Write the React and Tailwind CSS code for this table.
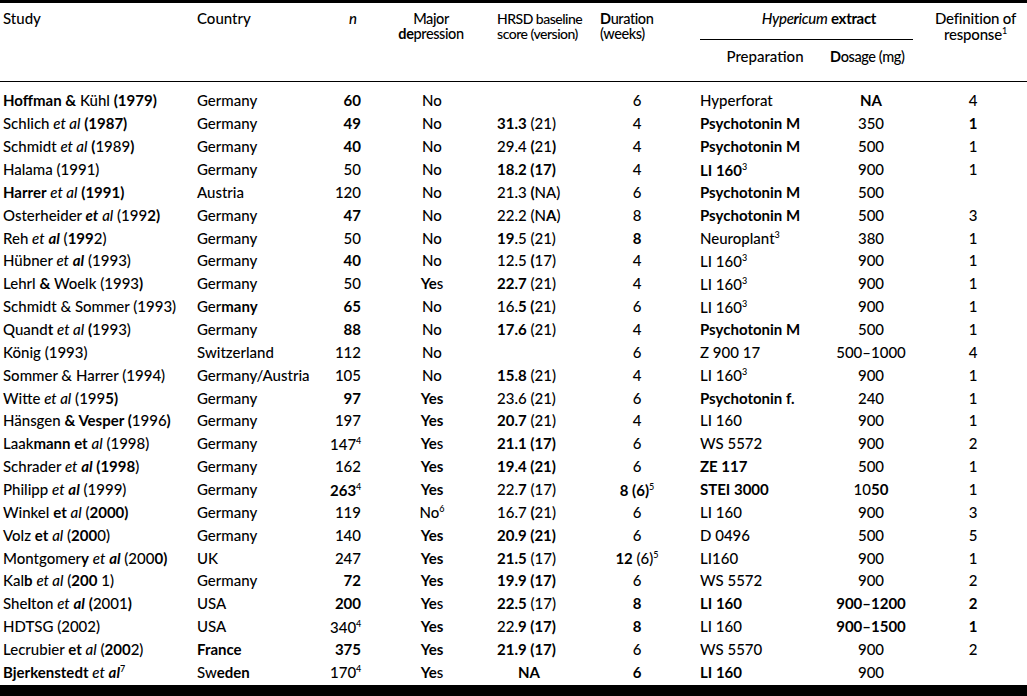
import React from "react";

const rows = [
  ["*Hoffman &* Kühl *(1979)*", "Germany", "*60*", "No", "", "6", "Hyperforat", "*NA*", "4"],
  ["Schlich _et al_ *(1987)*", "Germany", "*49*", "No", "*31.3* (21)", "4", "*Psychotonin M*", "350", "*1*"],
  ["Schmidt _et al_ *(*1989*)*", "Germany", "*40*", "No", "29.4 *(*21*)*", "4", "*Psychotonin M*", "500", "1"],
  ["Halama (1991)", "Germany", "50", "No", "*18.2 (17)*", "4", "*LI 160*^3^", "900", "1"],
  ["*Harrer* _et al_ *(1991)*", "Austria", "120", "No", "21.3 *(*NA)", "6", "*Psychotonin M*", "500", ""],
  ["Osterheider *_et_* _al_ (199*2)*", "Germany", "*47*", "No", "22.2 (N*A*)", "8", "*Psychotonin M*", "500", "3"],
  ["Reh _et_ *_al_* (*199*2)", "Germany", "50", "No", "*19*.5 (21)", "*8*", "Neuroplant^3^", "380", "1"],
  ["Hübner _et_ *_al_* (1993)", "Germany", "*40*", "No", "12.5 *(*17)", "4", "LI 160^3^", "900", "1"],
  ["Lehrl *&* Woelk (1993*)*", "Germany", "50", "*Ye*s", "*22.7* (21)", "4", "LI 160^3^", "900", "1"],
  ["Schmidt & Sommer (1993)", "Ger*many*", "*65*", "No", "16.*5 (*21)", "6", "LI 160^3^", "900", "1"],
  ["Quand*t* _et al_ *(*1993)", "Germany", "*88*", "No", "*17.6* (21)", "4", "*Psychotonin M*", "500", "1"],
  ["König (1993)", "Switzerland", "112", "No", "", "6", "Z 900 17", "500–1000", "4"],
  ["Sommer & Harrer (1994)", "Germany/Austria", "105", "No", "*15.8* (21)", "4", "LI 160^3^", "900", "1"],
  ["Witte _et al_ (199*5)*", "Germany", "*97*", "*Yes*", "23.6 (21)", "6", "*Psychotonin f.*", "240", "1"],
  ["Hänsgen *& Vesper (*1996*)*", "Germany", "197", "*Yes*", "*20.7* (21)", "4", "LI 160", "900", "1"],
  ["Laak*mann et* _al_ (1998)", "Germany", "147^4^", "*Ye*s", "*21.1 (17)*", "6", "WS 5572", "900", "2"],
  ["Schrader _et_ *_al_ (1998*)", "Germany", "162", "*Yes*", "*19.4 (21)*", "6", "*ZE 117*", "500", "1"],
  ["Philipp _et_ *_al_* (1999)", "Germany", "*263*^4^", "*Yes*", "22.*7* (17)", "*8 (6)*^5^", "*STEI 3000*", "10*50*", "1"],
  ["Winkel *et* _al_ (*2000)*", "Germany", "119", "No^6^", "16.7 *(*21)", "6", "LI 160", "900", "3"],
  ["Volz *et* _al_ (*200*0)", "Germany", "140", "*Yes*", "*20.9 (21)*", "6", "D 0496", "500", "5"],
  ["Montgomer*y* _et_ *_al_* (200*0)*", "UK", "247", "*Yes*", "*21.5* (17)", "*12* (6)^5^", "LI160", "900", "1"],
  ["Kal*b* _et al_ (*200* 1)", "Germany", "*72*", "*Yes*", "*19.9 (17)*", "6", "WS 5572", "900", "2"],
  ["She*l*ton _et_ *_al_* *(*2001*)*", "USA", "*200*", "*Ye*s", "*22.5* (17)", "*8*", "*LI 160*", "*900–1200*", "*2*"],
  ["HDTSG (2002)", "USA", "340^4^", "*Yes*", "22.*9 (17)*", "*8*", "LI 160", "*900–1500*", "*1*"],
  ["Lecrubier *et* _al_ (*200*2)", "*France*", "*375*", "*Yes*", "*21.9 (17)*", "6", "WS 5570", "900", "2"],
  ["*Bjerkenstedt* _et_ *_al_*^7^", "Sw*eden*", "170^4^", "*Ye*s", "*NA*", "*6*", "*LI 160*", "900", ""],
];

function Rich({ s }) {
  const parts = [];
  let b = false, i = false, sup = false, buf = "";
  const flush = () => {
    if (buf) {
      parts.push({ t: buf, b, i, sup });
      buf = "";
    }
  };
  for (const ch of s) {
    if (ch === "*") { flush(); b = !b; }
    else if (ch === "_") { flush(); i = !i; }
    else if (ch === "^") { flush(); sup = !sup; }
    else buf += ch;
  }
  flush();
  return parts.map((p, k) => {
    let cls = "";
    if (p.b) cls += " font-bold";
    if (p.i) cls += " italic";
    if (p.sup) cls += " align-super text-[9px] leading-none";
    return (
      <span key={k} className={cls}>
        {p.t}
      </span>
    );
  });
}

const cols = "grid grid-cols-[197px_133px_37px_130px_103px_74px_156px_82px_115px]";

export default function App() {
  return (
    <div
      className="w-[1027px] h-[696px] overflow-hidden bg-white text-black text-[15px] font-medium"
      style={{ fontFamily: "Lato, 'Open Sans', sans-serif" }}
    >
      <div className="border-t-[3px] border-b border-black">
        <div className={`${cols} h-[78px] items-start pt-[8px] leading-[15px] whitespace-nowrap`}>
          <div className="pl-[3px]">Study</div>
          <div>Country</div>
          <div className="text-center pl-[9px] italic">n</div>
          <div className="text-center pr-[2px] text-[14.5px] tracking-[-0.4px]">
            <div>Major</div>
            <div><span className="font-bold">de</span>pression</div>
          </div>
          <div className="text-center pr-[22px] text-[14px] tracking-[-0.5px]">
            <div>HRSD baseline</div>
            <div>score (version)</div>
          </div>
          <div className="text-center pr-[38px] text-[14.5px] tracking-[-0.4px]">
            <div><span className="font-bold">D</span>uration</div>
            <div>(weeks)</div>
          </div>
          <div className="col-span-2">
            <div className="pl-[52px] text-center tracking-[-0.3px]">
              <span className="italic">Hype</span>
              <span className="italic font-bold">r</span>
              <span className="italic">icum</span> <span className="font-bold">extract</span>
            </div>
            <div className="mt-[13px] ml-[26px] w-[213px] h-px bg-black" />
            <div className="grid grid-cols-[156px_82px] mt-[9px]">
              <div className="text-center pl-[26px]">Preparation</div>
              <div className="text-center pr-[14px] text-[14.5px] tracking-[-0.4px]"><span className="font-bold">D</span>osage (mg)</div>
            </div>
          </div>
          <div className="text-center pl-[12px] tracking-[-0.2px]">
            <div>Definition of</div>
            <div>response<span className="align-super text-[9px] leading-none">1</span></div>
          </div>
        </div>
      </div>
      <div className="pt-[7.5px] pb-[1px] border-b-[11px] border-black">
        {rows.map((r, idx) => (
          <div key={idx} className={`${cols} h-[22.86px] items-center whitespace-nowrap leading-[15px]`}>
            <div className="pl-[3px]"><Rich s={r[0]} /></div>
            <div><Rich s={r[1]} /></div>
            <div className="text-right pr-[6px]"><Rich s={r[2]} /></div>
            <div className="text-center"><Rich s={r[3]} /></div>
            {r[4] === "*NA*" ? (
              <div className="text-center pr-[39px]"><Rich s={r[4]} /></div>
            ) : (
              <div className="text-right pr-[47px]"><Rich s={r[4]} /></div>
            )}
            <div className="text-center"><Rich s={r[5]} /></div>
            <div className="pl-[26px]"><Rich s={r[6]} /></div>
            <div className="text-center"><Rich s={r[7]} /></div>
            <div className="text-center pl-[7px]"><Rich s={r[8]} /></div>
          </div>
        ))}
      </div>
    </div>
  );
}
